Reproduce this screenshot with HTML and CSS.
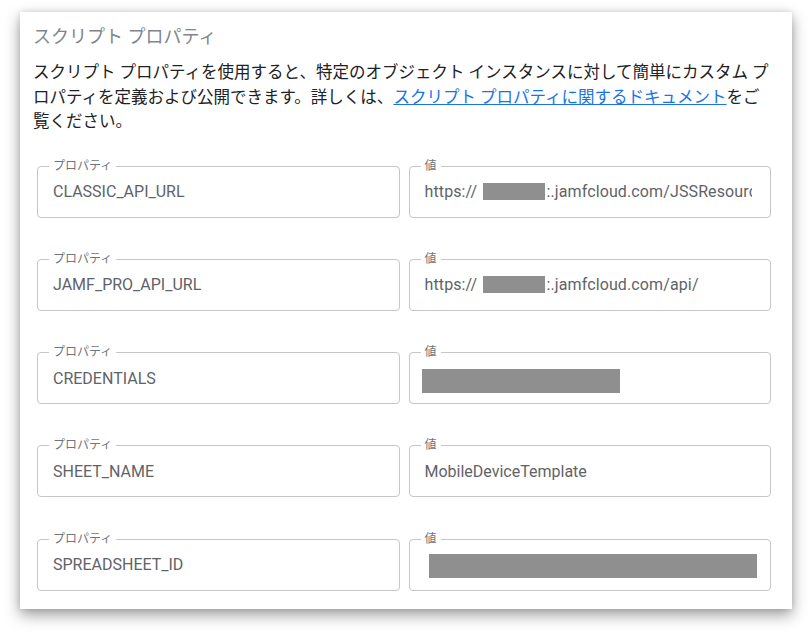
FILE: index.html
```html
<!DOCTYPE html>
<html lang="ja">
<head>
<meta charset="utf-8">
<title>スクリプト プロパティ</title>
<link rel="stylesheet" href="styles.css">
</head>
<body>
<section class="card">
  <h2 class="title">スクリプト プロパティ</h2>
  <p class="desc">スクリプト プロパティを使用すると、特定のオブジェクト インスタンスに対して簡単にカスタム プロパティを定義および公開できます。詳しくは、<a class="link" href="#">スクリプト プロパティに関するドキュメント</a>をご覧ください。</p>
  <div class="grid">
    <div class="field"><span class="label">プロパティ</span><div class="value">CLASSIC_API_URL</div></div>
    <div class="field"><span class="label">値</span><div class="value url">https:// <span class="redact-inline"></span>:.jamfcloud.com/JSSResource</div></div>

    <div class="field"><span class="label">プロパティ</span><div class="value">JAMF_PRO_API_URL</div></div>
    <div class="field"><span class="label">値</span><div class="value url">https:// <span class="redact-inline"></span>:.jamfcloud.com/api/</div></div>

    <div class="field"><span class="label">プロパティ</span><div class="value">CREDENTIALS</div></div>
    <div class="field"><span class="label">値</span><div class="redact redact-cred"></div></div>

    <div class="field"><span class="label">プロパティ</span><div class="value">SHEET_NAME</div></div>
    <div class="field"><span class="label">値</span><div class="value">MobileDeviceTemplate</div></div>

    <div class="field"><span class="label">プロパティ</span><div class="value">SPREADSHEET_ID</div></div>
    <div class="field"><span class="label">値</span><div class="redact redact-sheet"></div></div>
  </div>
</section>
</body>
</html>
```
FILE: styles.css
```css
html, body {
  margin: 0;
  padding: 0;
  background: #ffffff;
}

body {
  font-family: Roboto, "Noto Sans CJK JP", sans-serif;
  padding: 12px 20px 29px 20px;
  min-height: 638px;
  box-sizing: border-box;
}

.card {
  box-sizing: border-box;
  width: 772px;
  background: #ffffff;
  padding: 13px 19px 18px 13px;
  box-shadow: 0 6px 14px rgba(0, 0, 0, 0.38), 0 0 6px rgba(0, 0, 0, 0.12);
}

.title {
  margin: 0;
  font-size: 18px;
  line-height: 24px;
  font-weight: 400;
  color: #80868b;
}

.desc {
  margin: 12px 0 0 0;
  font-size: 16.5px;
  line-height: 24.5px;
  color: #202124;
}

.link {
  color: #1a73e8;
  text-decoration: underline;
}

.grid {
  display: grid;
  grid-template-columns: 1fr 1fr;
  column-gap: 9px;
  row-gap: 41.25px;
  padding: 0 2px 0 4px;
  margin-top: 31px;
}

.field {
  position: relative;
  box-sizing: border-box;
  height: 52px;
  border: 1px solid #c4c7c5;
  border-radius: 4px;
  padding: 0 18px 0 15px;
  display: flex;
  align-items: center;
  min-width: 0;
}

.label {
  position: absolute;
  top: -8px;
  left: 11px;
  padding: 0 4px;
  background: #ffffff;
  font-size: 12px;
  line-height: 14px;
  color: #70757a;
}

.value {
  flex: 1;
  min-width: 0;
  overflow: hidden;
  white-space: nowrap;
  font-size: 16px;
  color: #5f6368;
}

.url {
  letter-spacing: 0.12px;
}

.redact-inline {
  display: inline-block;
  width: 62px;
  height: 17px;
  margin-left: 2px;
  margin-right: 1px;
  vertical-align: -2.5px;
  background: #8f8f8f;
}

.redact {
  flex-shrink: 0;
  background: #8f8f8f;
  height: 24px;
}

.redact-cred {
  width: 198px;
  margin-left: -3px;
  margin-top: 6px;
}

.redact-sheet {
  width: 328px;
  margin-left: 4px;
  margin-top: 2px;
}
```
